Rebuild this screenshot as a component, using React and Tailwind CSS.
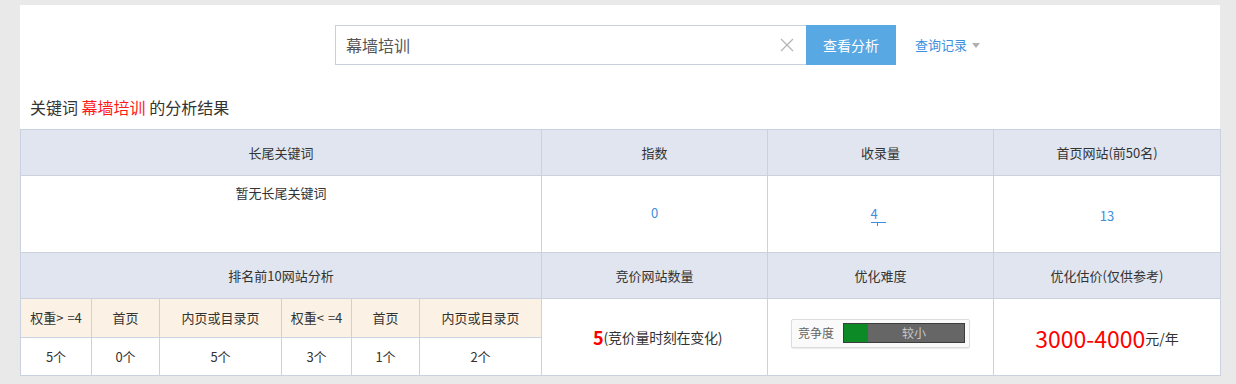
import React from 'react';

const FONT = { fontFamily: '"Noto Sans CJK SC", "Noto Sans", sans-serif' };

const subHeads = [
  <>权重<span className="tracking-[4px]">&gt;</span>=4</>,
  '首页',
  '内页或目录页',
  <>权重<span className="tracking-[4px]">&lt;</span>=4</>,
  '首页',
  '内页或目录页',
];
const subCounts = ['5个', '0个', '5个', '3个', '1个', '2个'];

const ClearIcon = () => (
  <svg width="14" height="14" viewBox="0 0 14 14" className="shrink-0">
    <path d="M1 1 L13 13 M13 1 L1 13" stroke="#b4b4b4" strokeWidth="1.2" fill="none" />
  </svg>
);

const App = () => {
  return (
    <div className="w-[1236px] h-[384px] bg-[#e9e9e9] pt-[5px] pl-[20px] overflow-hidden" style={FONT}>
      <div className="w-[1200px] bg-white">
        {/* Search bar */}
        <div className="pt-[20px] pl-[315px] flex items-center">
          <div className="w-[471px] h-[40px] border border-[#c9d0dc] border-r-0 flex items-center pl-[10px] pr-[12px]">
            <span className="flex-1 text-[16px] text-[#555]">幕墙培训</span>
            <ClearIcon />
          </div>
          <button type="button" className="w-[90px] h-[40px] bg-[#58a8e3] text-white text-[14px]">
            查看分析
          </button>
          <div className="ml-[19px] flex items-center gap-[5px] text-[13px] text-[#3d8fe0]">
            <span>查询记录</span>
            <span className="w-0 h-0 border-l-[4px] border-r-[4px] border-t-[5px] border-l-transparent border-r-transparent border-t-[#b0b0b0]"></span>
          </div>
        </div>

        {/* Title */}
        <div className="mt-[32px] mb-[12px] pl-[10px] text-[16px] leading-[20px] text-[#333]">
          关键词 <span className="text-[#ff1a1a]">幕墙培训</span> 的分析结果
        </div>

        {/* Result table */}
        <table className="w-[1200px] table-fixed border-collapse text-[13px] text-[#333] text-center">
          <colgroup>
            <col className="w-[71px]" />
            <col className="w-[68px]" />
            <col className="w-[122px]" />
            <col className="w-[70px]" />
            <col className="w-[68px]" />
            <col className="w-[122px]" />
            <col className="w-[226px]" />
            <col className="w-[226px]" />
            <col className="w-[227px]" />
          </colgroup>
          <tbody>
            <tr className="h-[46px] bg-[#e0e5ef]">
              <td colSpan={6} className="border border-[#cbd2df]">长尾关键词</td>
              <td className="border border-[#cbd2df]">指数</td>
              <td className="border border-[#cbd2df]">收录量</td>
              <td className="border border-[#cbd2df]">首页网站(前50名)</td>
            </tr>
            <tr className="h-[77px]">
              <td colSpan={6} className="border border-[#cbd2df] align-top pt-[7px]">暂无长尾关键词</td>
              <td className="border border-[#cbd2df] text-[#3d8fe0] pb-[3px]">0</td>
              <td className="border border-[#cbd2df] text-[#3d8fe0]">
                <span className="relative inline-block w-[15px] text-left border-b border-[#3d8fe0] leading-[16px] mr-[5px]">
                  4
                  <span className="absolute left-[6px] top-[16px] w-px h-[4px] bg-[#3d8fe0]"></span>
                </span>
              </td>
              <td className="border border-[#cbd2df] text-[#3d8fe0] pt-[3px]">13</td>
            </tr>
            <tr className="h-[46px] bg-[#e0e5ef]">
              <td colSpan={6} className="border border-[#cbd2df]">排名前10网站分析</td>
              <td className="border border-[#cbd2df]">竞价网站数量</td>
              <td className="border border-[#cbd2df]">优化难度</td>
              <td className="border border-[#cbd2df]">优化估价(仅供参考)</td>
            </tr>
            <tr className="h-[39px] bg-[#fbf2e5]">
              {subHeads.map((h, i) => (
                <td key={i} className="border border-[#cbd2df]">{h}</td>
              ))}
              <td rowSpan={2} className="border border-[#cbd2df] bg-white pl-[6px]">
                <span className="text-[18px] font-bold text-[#ff0000] align-middle">5</span>
                <span className="text-[14px] text-[#333] align-middle tracking-[-0.3px]">(竞价量时刻在变化)</span>
              </td>
              <td rowSpan={2} className="border border-[#cbd2df] bg-white pb-[8px]">
                <div className="mx-auto w-[179px] h-[29px] border border-[#dcdcdc] rounded-[2px] bg-[#fafafa] shadow-[0_1px_1px_rgba(0,0,0,0.08)] flex items-center pl-[6px] pr-[4px]">
                  <span className="text-[12px] text-[#666] w-[45px] text-left">竞争度</span>
                  <div className="flex-1 h-[20px] bg-[#666] border border-[#3c3c3c] flex items-stretch relative">
                    <div className="w-[24px] bg-[#0b8a26]"></div>
                    <span className="flex-1 text-[12px] text-[#c8c8c8] leading-[18px] pr-[4px]">较小</span>
                  </div>
                </div>
              </td>
              <td rowSpan={2} className="border border-[#cbd2df] bg-white pt-[2px]">
                <span className="text-[23px] text-[#ff0000] align-middle">3000-4000</span>
                <span className="text-[14px] text-[#333] align-middle">元/年</span>
              </td>
            </tr>
            <tr className="h-[38px] bg-white">
              {subCounts.map((c, i) => (
                <td key={i} className="border border-[#cbd2df]">{c}</td>
              ))}
            </tr>
          </tbody>
        </table>
      </div>
    </div>
  );
};

export default App;
